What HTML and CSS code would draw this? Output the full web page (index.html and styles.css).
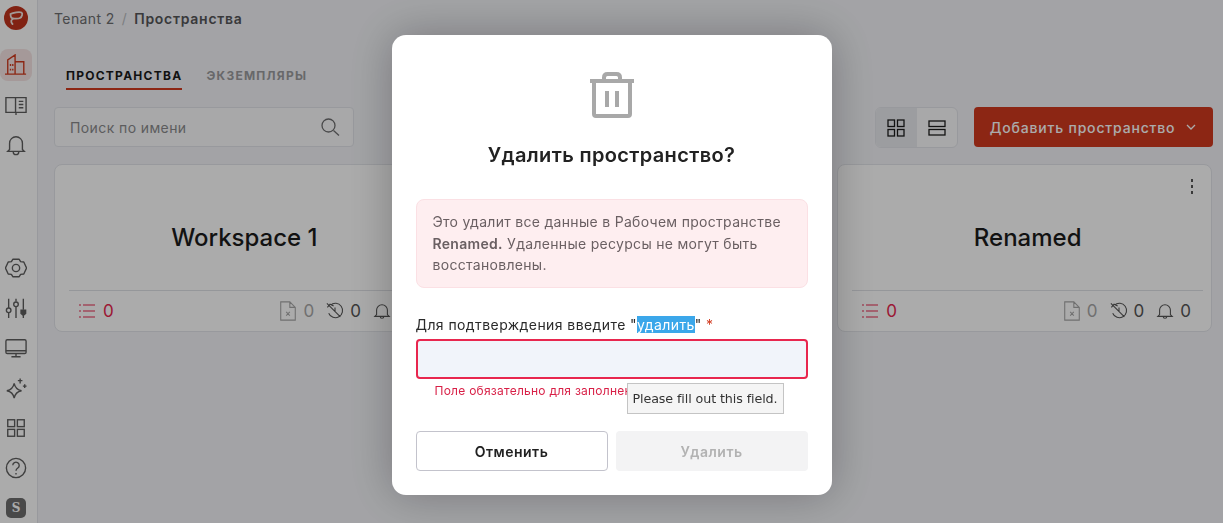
FILE: index.html
```html
<!DOCTYPE html>
<html lang="ru">
<head>
<meta charset="utf-8">
<title>Пространства</title>
<link rel="stylesheet" href="styles.css">
</head>
<body>
<div class="app">
  <aside class="sidebar">
    <div class="logo"><svg viewBox="0 0 24 24" width="24" height="24"><circle cx="12" cy="12" r="12" fill="#c0341d"/><path d="M6.500 8c2.500-1.500 9-2.500 11-1.500 1.500 1 .5 4.500-1.500 5.500-2 1-5 .5-7 .5-1.500 0-2.500-1-2.500-4.500zM9 13c-2 .5-2.500 3-.5 5" fill="none" stroke="#f2e6e2" stroke-width="1.800" stroke-linecap="round"/></svg></div>
    <nav class="nav-top">
      <a class="nav-item active"><svg viewBox="0 0 24 24" class="ico red"><path d="M0 22h23M3 22V6.500L11 1v21M11 8.500h9.500V22M6 11v2M8.500 11v2M6 16v2M8.500 16v2"/></svg></a>
      <a class="nav-item"><svg viewBox="0 0 24 24" class="ico"><path d="M1 4h10.500v16H1zM11.500 4H23v16H11.500M12 20v3M15 8h5M15 11.500h5M15 15h5"/></svg></a>
      <a class="nav-item"><svg viewBox="0 0 24 24" class="ico"><path d="M5 17V10a7 7 0 0 1 14 0v7l2 2H3zM9 19.500a3 3 0 0 0 6 0"/></svg></a>
    </nav>
    <nav class="nav-bottom">
      <a class="nav-item"><svg viewBox="0 0 24 24" class="ico round"><path d="M8.500 2.500h7l1.500 2.500 3.500.5 3 6.500-3 6.500-3.500.5-1.500 2.500h-7l-1.500-2.500-3.500-.5-3-6.500 3-6.500 3.500-.5z"/><circle cx="12" cy="12" r="4"/></svg></a>
      <a class="nav-item"><svg viewBox="0 0 24 24" class="ico"><path d="M4 2v10M4 17v6M12 2v3M12 11v12M20 2v12M20 20v3"/><circle cx="4" cy="14.500" r="2.500"/><circle cx="12" cy="8" r="2.500"/><path d="M17.500 14.500h5v3.500L20 20l-2.500-2z" fill="#5f5f5f"/></svg></a>
      <a class="nav-item"><svg viewBox="0 0 24 24" class="ico"><rect x="1" y="3" width="22" height="15" rx="1.500"/><path d="M1 15h22M12 18v3.500M7 21.500h10"/></svg></a>
      <a class="nav-item"><svg viewBox="0 0 24 24" class="ico"><path d="M10 7c1 5 3 7 8 8-5 1-7 3-8 8-1-5-3-7-8-8 5-1 7-3 8-8zM16.500 1.500v5.500M14 4h5M21.500 8v4M19.500 10h4"/></svg></a>
      <a class="nav-item"><svg viewBox="0 0 24 24" class="ico"><rect x="3" y="3" width="7.500" height="7.500"/><rect x="13.500" y="3" width="7.500" height="7.500"/><rect x="3" y="13.500" width="7.500" height="7.500"/><rect x="13.500" y="13.500" width="7.500" height="7.500"/></svg></a>
      <a class="nav-item"><svg viewBox="0 0 24 24" class="ico"><circle cx="12" cy="12" r="10.500"/><path d="M8.500 9a3.500 3.500 0 1 1 5.500 3c-1.500 1-2 1.500-2 3M12 17.500v1.500"/></svg></a>
      <div class="avatar">S</div>
    </nav>
  </aside>

  <main class="main">
    <header class="crumbs"><span class="crumb">Tenant 2</span><span class="sep">/</span><strong class="crumb-now">Пространства</strong></header>
    <div class="tabs"><span class="tab current">ПРОСТРАНСТВА</span><span class="tab">ЭКЗЕМПЛЯРЫ</span></div>
    <div class="toolbar">
      <div class="search"><span>Поиск по имени</span><svg viewBox="0 0 20 20" class="search-ico"><circle cx="8.500" cy="8.500" r="6.500"/><path d="M13.500 13.500l5.500 5"/></svg></div>
      <div class="tools">
        <div class="switch">
          <span class="switch-btn on"><svg viewBox="0 0 18 18"><rect x="1" y="1" width="6.500" height="6.500"/><rect x="10.500" y="1" width="6.500" height="6.500"/><rect x="1" y="10.500" width="6.500" height="6.500"/><rect x="10.500" y="10.500" width="6.500" height="6.500"/></svg></span>
          <span class="switch-btn"><svg viewBox="0 0 18 18"><rect x="1" y="2" width="16" height="5.500"/><rect x="1" y="10.500" width="16" height="5.500"/></svg></span>
        </div>
        <button class="add" type="button">Добавить пространство<svg viewBox="0 0 12 12" class="chev"><path d="M2 4l4 4 4-4"/></svg></button>
      </div>
    </div>
    <section class="cards">
      <article class="card">
        <h2 class="card-title">Workspace 1</h2>
        <footer class="card-foot">
          <span class="stat alert"><svg viewBox="0 0 18 18" class="s"><path d="M5 3h12M5 9h12M5 15h12M1 3h2M1 9h2M1 15h2"/></svg>0</span>
          <span class="stats">
            <span class="stat muted"><svg viewBox="0 0 18 22" class="s tall"><path d="M1 1h10l6 6v14H1zM11 1v6h6M7 12l4 4M11 12l-4 4"/></svg>0</span>
            <span class="stat"><svg viewBox="0 0 20 20" class="s"><path d="M5 3.500a8 8 0 1 1-2 9M1 1.500l15 15M1.500 6l3-3.500 4 2M10 6v4"/></svg>0</span>
            <span class="stat"><svg viewBox="0 0 20 20" class="s"><path d="M4 14V9a6 6 0 0 1 12 0v5l2 2H2zM8 16a2 2 0 0 0 4 0"/></svg>0</span>
          </span>
        </footer>
      </article>
      <article class="card"></article>
      <article class="card">
        <span class="kebab"><i></i><i></i><i></i></span>
        <h2 class="card-title">Renamed</h2>
        <footer class="card-foot">
          <span class="stat alert"><svg viewBox="0 0 18 18" class="s"><path d="M5 3h12M5 9h12M5 15h12M1 3h2M1 9h2M1 15h2"/></svg>0</span>
          <span class="stats">
            <span class="stat muted"><svg viewBox="0 0 18 22" class="s tall"><path d="M1 1h10l6 6v14H1zM11 1v6h6M7 12l4 4M11 12l-4 4"/></svg>0</span>
            <span class="stat"><svg viewBox="0 0 20 20" class="s"><path d="M5 3.500a8 8 0 1 1-2 9M1 1.500l15 15M1.500 6l3-3.500 4 2M10 6v4"/></svg>0</span>
            <span class="stat"><svg viewBox="0 0 20 20" class="s"><path d="M4 14V9a6 6 0 0 1 12 0v5l2 2H2zM8 16a2 2 0 0 0 4 0"/></svg>0</span>
          </span>
        </footer>
      </article>
    </section>
  </main>
</div>

<div class="overlay">
  <div class="modal">
    <svg viewBox="0 0 48 48" class="trash"><path d="M2 10h44M16 10V6.500Q16 3 19.500 3h9Q32 3 32 6.500V10M6 10v33q0 2 2 2h32q2 0 2-2V10M19 20v16M29 20v16"/></svg>
    <h1 class="modal-title">Удалить пространство?</h1>
    <div class="warn">Это удалит все данные в Рабочем пространстве <b>Renamed.</b> Удаленные ресурсы не могут быть восстановлены.</div>
    <label class="label">Для подтверждения введите "<mark>удалить</mark>" <em>*</em></label>
    <div class="input"></div>
    <div class="error-row">
      <span class="error">Поле обязательно для заполнения</span>
      <span class="tip">Please fill out this field.</span>
    </div>
    <div class="actions">
      <button class="btn cancel" type="button">Отменить</button>
      <button class="btn del" type="button">Удалить</button>
    </div>
  </div>
</div>
</body>
</html>
```
FILE: styles.css
```css
* { box-sizing: border-box; }
html, body { margin: 0; height: 100%; overflow: hidden; }
body { font-family: Inter, "Liberation Sans", sans-serif; color: #1c1c1c; background: #f3f4f8; }
h1, h2 { margin: 0; }

.app { display: flex; height: 523px; }
.sidebar { width: 38px; flex: none; background: #fff; border-right: 1px solid #e3e5ea; display: flex; flex-direction: column; align-items: center; padding: 6px 5px 5px 0; }
.logo { width: 24px; height: 24px; margin-bottom: 19px; }
.nav-top { display: flex; flex-direction: column; align-items: center; flex: 1; }
.nav-bottom { display: flex; flex-direction: column; align-items: center; }
.nav-item { width: 32px; height: 32px; display: flex; align-items: center; justify-content: center; border-radius: 8px; margin-bottom: 8px; }
.nav-item.active { background: #f6e5e4; }
.ico { width: 22px; height: 22px; fill: none; stroke: #5f5f5f; stroke-width: 1.500; }
.ico.red { stroke: #d13a1f; }
.ico.round { stroke-linejoin: round; }
.avatar { width: 20px; height: 20px; margin-top: 6px; border-radius: 5px; background: #6d6d6d; color: #fff; font: 700 12px "DejaVu Serif", serif; display: flex; align-items: center; justify-content: center; }

.main { flex: 1; min-width: 0; padding: 0 11px 0 16px; }
.crumbs { height: 37px; display: flex; align-items: center; font-size: 14px; letter-spacing: .4px; }
.crumb { color: #6e6e70; }
.sep { color: #b9bbc0; margin: 0 7px; }
.crumb-now { color: #565658; font-weight: 600; letter-spacing: .72px; }

.tabs { display: flex; gap: 24px; padding-left: 12px; margin-top: 30px; height: 23px; }
.tab { font-size: 12px; font-weight: 700; letter-spacing: 1.250px; color: #9b9b9e; line-height: 18px; }
.tab.current { color: #1a1a1a; border-bottom: 2px solid #d13a1f; height: 23px; }

.toolbar { display: flex; justify-content: space-between; margin-top: 17px; height: 40px; margin-right: -1px; }
.search { width: 300px; height: 40px; background: #fbfbfc; border: 1px solid #e3e5ea; border-radius: 4px; display: flex; align-items: center; justify-content: space-between; padding: 0 13px 0 15px; color: #8a8a8c; font-size: 14px; letter-spacing: .4px; }
.search-ico { width: 20px; height: 20px; fill: none; stroke: #6e6e70; stroke-width: 1.300; }
.tools { display: flex; gap: 16px; }
.switch { display: flex; width: 83px; height: 41px; border: 1px solid #e3e5ea; border-radius: 6px; overflow: hidden; background: #fbfbfc; }
.switch-btn { flex: 1; display: flex; align-items: center; justify-content: center; }
.switch-btn.on { background: #e9eaef; }
.switch-btn svg { width: 18px; height: 18px; fill: none; stroke: #1c1c1c; stroke-width: 1.300; }
.add { width: 239px; height: 40px; border: 0; border-radius: 4px; background: #d13a1f; color: #fff; font: 500 14px Inter, sans-serif; letter-spacing: .82px; display: flex; align-items: center; justify-content: center; gap: 10px; }
.chev { width: 12px; height: 12px; fill: none; stroke: #fff; stroke-width: 1.300; }

.cards { display: grid; grid-template-columns: repeat(3, 1fr); gap: 17px; margin-top: 17px; }
.card { position: relative; height: 168px; background: #fff; border: 1px solid #e3e5ea; border-radius: 8px; display: flex; flex-direction: column; padding: 0 8px 0 14px; }
.card-title { flex: 1; display: flex; align-items: center; justify-content: center; font-size: 24px; font-weight: 500; padding-top: 20px; height: 125px; }
.card-foot { height: 41px; border-top: 1px solid #dfe1e6; display: flex; align-items: center; justify-content: space-between; padding: 0 12px 0 9px; }
.stats { display: flex; gap: 12px; }
.stat { display: inline-flex; align-items: center; gap: 6px; font: 400 17px Inter, sans-serif; color: #555; }
.stat.alert { color: #e8264e; gap: 7px; }
.stat.muted { color: #a8a8a8; }
.s { width: 18px; height: 18px; fill: none; stroke: currentColor; stroke-width: 1.200; }
.s.tall { height: 20px; }
.kebab { position: absolute; top: 14px; right: 18px; display: flex; flex-direction: column; gap: 3px; }
.kebab i { width: 2px; height: 3px; background: #555; display: block; }

.overlay { position: fixed; inset: 0; background: rgba(0,0,0,.33); display: flex; justify-content: center; padding-top: 35px; }
.modal { width: 440px; height: 460px; background: #fff; border-radius: 14px; padding: 36px 24px 24px; box-shadow: 0 0 45px rgba(0,0,0,.28); display: flex; flex-direction: column; align-items: stretch; }
.trash { width: 48px; height: 48px; align-self: center; fill: none; stroke: #a8a8a8; stroke-width: 4; }
.modal-title { margin-top: 24px; text-align: center; font-size: 20px; font-weight: 600; line-height: 24px; letter-spacing: .35px; color: #222; }
.warn { margin-top: 32px; height: 89px; background: #feeef0; border: 1px solid #fbe0e4; border-radius: 8px; padding: 11px 16px 0 16px; font-size: 14px; line-height: 21.500px; letter-spacing: .3px; color: #6a5f62; }
.warn b { font-weight: 600; }
.label { margin-top: 27px; font-size: 14px; line-height: 20px; letter-spacing: .42px; color: #2a2a2a; }
mark { background: #3ba7ea; color: #fff; }
.label em { color: #d13a1f; font-style: normal; }
.input { margin-top: 4px; height: 40px; background: #f1f4fa; border: 2px solid #e8264e; border-radius: 4px; }
.error-row { position: relative; height: 52px; padding: 2px 0 0 19px; line-height: 16px; }
.error { font-size: 12px; line-height: 16px; letter-spacing: .25px; color: #d81f46; }
.tip { position: absolute; left: 211px; top: 4px; height: 31px; width: 157px; background: #f5f5f5; border: 1px solid #c4c4c4; font: 400 12.700px "DejaVu Sans", sans-serif; color: #333; display: flex; align-items: center; justify-content: center; white-space: nowrap; letter-spacing: -.1px; }
.actions { display: grid; grid-template-columns: 1fr 1fr; gap: 8px; }
.btn { height: 40px; border-radius: 4px; font: 600 14px Inter, sans-serif; letter-spacing: .5px; }
.cancel { background: #fff; border: 1px solid #c3c3cc; color: #222; }
.del { background: #f3f3f4; border: 0; color: #b2b2b2; }
```
